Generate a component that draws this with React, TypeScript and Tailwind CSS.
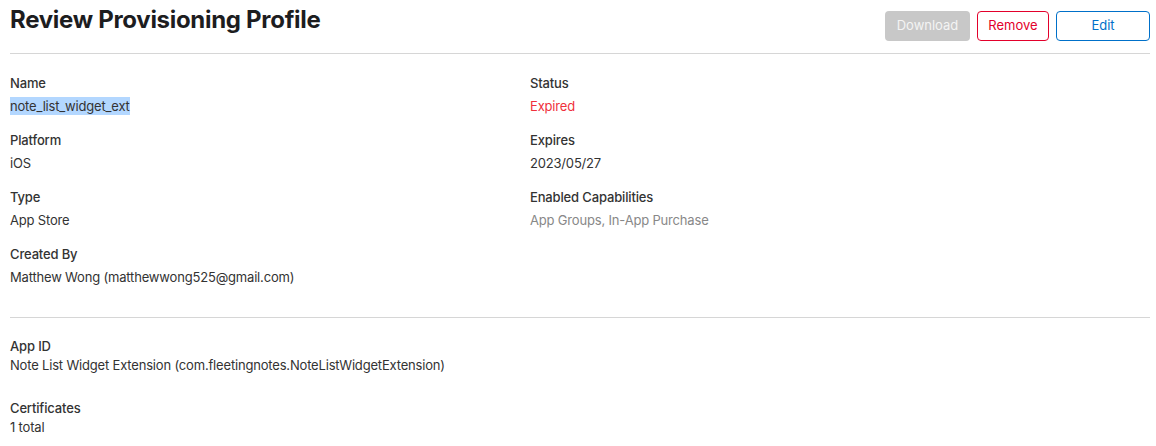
import React from "react";

const Field = ({ label, value, valueClass = "text-[#333]", highlight = false, tight = false }: { label: string; value: string; valueClass?: string; highlight?: boolean; tight?: boolean }) => (
  <div className={tight ? "mb-[25px]" : "mb-[16px]"}>
    <div className="text-[13px] leading-[18px] font-medium text-[#333] tracking-[-0.15px]">{label}</div>
    <div className={`${tight ? "mt-[1px]" : "mt-[5px]"} text-[13px] leading-[18px] tracking-[-0.18px] ${valueClass}`}>
      {highlight ? <span className="inline-block bg-[#b3d7ff]">{value}</span> : value}
    </div>
  </div>
);

export default function App() {
  return (
    <div className="w-[1156px] h-[446px] bg-white pl-[10px] pr-[6px] overflow-hidden" style={{ fontFamily: "Inter, 'Noto Sans', sans-serif" }}>
      <div className="flex justify-between items-start h-[54px] border-b border-[#d6d6d6]">
        <h1 className="mt-[4px] text-[24px] leading-[32px] font-bold text-[#1d1d1f] tracking-[-0.3px]">Review Provisioning Profile</h1>
        <div className="flex gap-[7px] mt-[11px]">
          <button className="w-[85px] h-[30px] rounded-[4px] bg-[#c8c8c8] text-[#f4f4f4] text-[13px]">Download</button>
          <button className="w-[72px] h-[30px] rounded-[4px] border border-[#e3002b] text-[#e3002b] text-[13px] bg-white">Remove</button>
          <button className="w-[94px] h-[30px] rounded-[4px] border border-[#0070c9] text-[#0070c9] text-[13px] bg-white">Edit</button>
        </div>
      </div>
      <div className="grid grid-cols-[520px_1fr] pt-[20px] pb-[15px] border-b border-[#d6d6d6]">
        <div>
          <Field label="Name" value="note_list_widget_ext" highlight />
          <Field label="Platform" value="iOS" />
          <Field label="Type" value="App Store" />
          <Field label="Created By" value="Matthew Wong (matthewwong525@gmail.com)" />
        </div>
        <div>
          <Field label="Status" value="Expired" valueClass="text-[#f0303c]" />
          <Field label="Expires" value="2023/05/27" />
          <Field label="Enabled Capabilities" value="App Groups, In-App Purchase" valueClass="text-[#888]" />
        </div>
      </div>
      <div className="pt-[19px]">
        <Field label="App ID" value="Note List Widget Extension (com.fleetingnotes.NoteListWidgetExtension)" tight />
        <Field label="Certificates" value="1 total" tight />
      </div>
    </div>
  );
}
